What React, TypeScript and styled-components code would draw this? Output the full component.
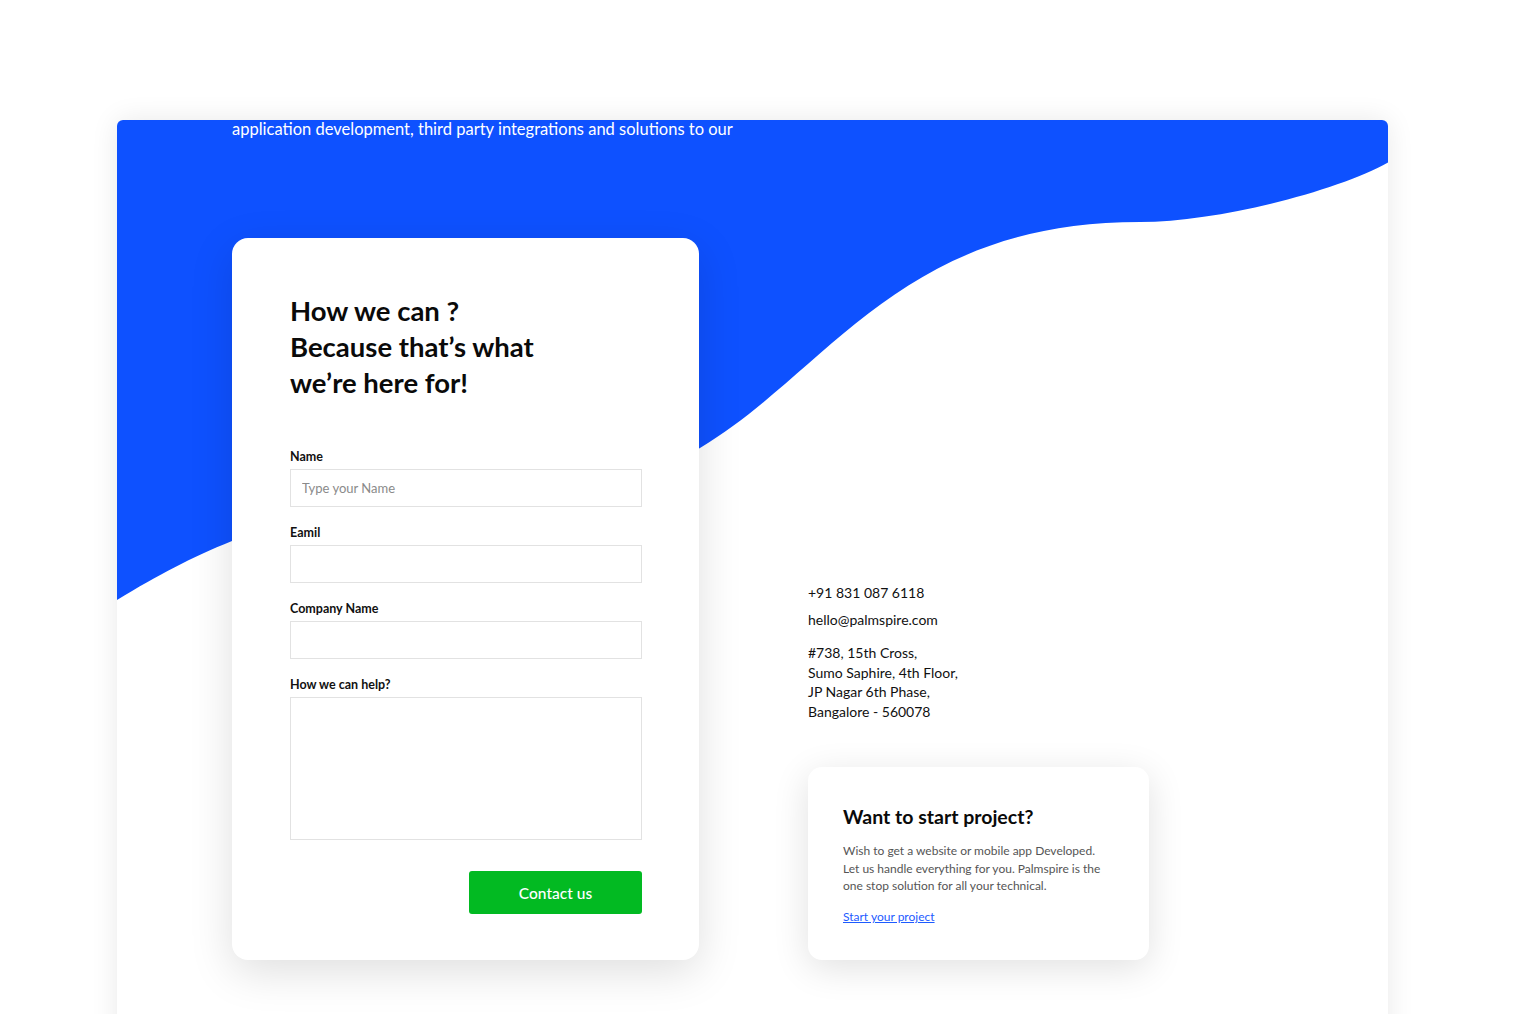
import React from "react";
import styled, { createGlobalStyle } from "styled-components";

const GlobalStyle = createGlobalStyle`
  html, body { margin: 0; padding: 0; background: #ffffff; }
  body { font-family: Lato, "Noto Sans", "Liberation Sans", sans-serif; color: #111; }
  * { box-sizing: border-box; }
`;

const Page = styled.div`
  height: 1014px;
  overflow: hidden;
  padding: 120px 0 0 117px;
`;

const Panel = styled.section`
  position: relative;
  width: 1271px;
  min-height: 1000px;
  background: #ffffff;
  border-radius: 6px 6px 0 0;
  box-shadow: 0 0 28px rgba(0, 0, 0, 0.09);
  overflow: hidden;
`;

const Wave = styled.svg`
  position: absolute;
  top: 0;
  left: 0;
  width: 1271px;
  height: 600px;
  z-index: 0;
`;

const Content = styled.div`
  position: relative;
  z-index: 1;
  padding-left: 115px;
`;

const Intro = styled.p`
  margin: 0;
  color: #ffffff;
  font-size: 16.5px;
  line-height: 18px;
  font-weight: 400;
`;

const Row = styled.div`
  display: flex;
  align-items: flex-end;
  gap: 109px;
  margin-top: 100px;
`;

const FormCard = styled.form`
  width: 467px;
  height: 722px;
  background: #ffffff;
  border-radius: 16px;
  box-shadow: 0 12px 44px rgba(0, 0, 0, 0.13);
  padding: 55px 57px 46px 58px;
  display: flex;
  flex-direction: column;
`;

const Heading = styled.h1`
  margin: 0 0 48px;
  font-size: 27.5px;
  line-height: 36px;
  font-weight: 700;
  color: #0a0a0a;
`;

const Field = styled.label<{ $last?: boolean }>`
  display: flex;
  flex-direction: column;
  gap: 4px;
  margin-bottom: ${(p) => (p.$last ? "31px" : "18px")};
`;

const LabelText = styled.span`
  font-size: 12.5px;
  line-height: 16px;
  font-weight: 700;
  color: #111;
`;

const Input = styled.input`
  width: 352px;
  height: 38px;
  border: 1px solid #e2e2e2;
  border-radius: 0;
  padding: 0 11px;
  font-family: inherit;
  font-size: 13px;
  color: #333;
  background: #fff;
  outline: none;
  &::placeholder { color: #8a8a8a; }
`;

const TextArea = styled.textarea`
  width: 352px;
  height: 143px;
  border: 1px solid #e2e2e2;
  border-radius: 0;
  resize: none;
  font-family: inherit;
  background: #fff;
  outline: none;
`;

const SubmitRow = styled.div`
  display: flex;
  justify-content: flex-end;
`;

const Button = styled.button`
  width: 173px;
  height: 43px;
  border: none;
  border-radius: 3px;
  background: #02ba22;
  color: #ffffff;
  font-family: inherit;
  font-size: 15.5px;
  font-weight: 500;
  cursor: pointer;
`;

const Side = styled.aside`
  width: 341px;
  display: flex;
  flex-direction: column;
`;

const InfoLine = styled.p<{ $gap?: number }>`
  margin: 0 0 ${(p) => p.$gap ?? 0}px;
  font-size: 14px;
  line-height: 20px;
  color: #111;
`;

const Address = styled.address`
  font-style: normal;
  font-size: 14px;
  line-height: 19.5px;
  color: #111;
  margin-bottom: 46px;
`;

const ProjectCard = styled.div`
  width: 341px;
  height: 193px;
  background: #ffffff;
  border-radius: 14px;
  box-shadow: 0 8px 36px rgba(0, 0, 0, 0.12);
  padding: 38px 30px 0 35px;
`;

const ProjectTitle = styled.h2`
  margin: 0 0 13px;
  font-size: 19.5px;
  line-height: 24px;
  font-weight: 700;
  color: #0a0a0a;
`;

const ProjectText = styled.p`
  margin: 0 0 13.5px;
  font-size: 12px;
  line-height: 17.5px;
  color: #555;
`;

const ProjectLink = styled.a`
  display: block;
  font-size: 12px;
  line-height: 17.5px;
  color: #1d5bff;
  text-decoration: underline;
`;

const WAVE_PATH =
  "M0,480 C43,454 73,438 115,421 C183,395 523,364 583,328 " +
  "C713,250 783,102 1023,102 C1103,102 1223,70 1272,42 L1272,0 L0,0 Z";

export default function App() {
  return (
    <>
      <GlobalStyle />
      <Page>
        <Panel>
          <Wave viewBox="0 0 1271 600" preserveAspectRatio="none" aria-hidden="true">
            <path d={WAVE_PATH} fill="#0e51ff" />
          </Wave>
          <Content>
            <Intro>application development, third party integrations and solutions to our</Intro>
            <Row>
              <FormCard onSubmit={(e) => e.preventDefault()}>
                <Heading>
                  How we can ?<br />
                  Because that’s what<br />
                  we’re here for!
                </Heading>
                <Field>
                  <LabelText>Name</LabelText>
                  <Input placeholder="Type your Name" />
                </Field>
                <Field>
                  <LabelText>Eamil</LabelText>
                  <Input />
                </Field>
                <Field>
                  <LabelText>Company Name</LabelText>
                  <Input />
                </Field>
                <Field $last>
                  <LabelText>How we can help?</LabelText>
                  <TextArea />
                </Field>
                <SubmitRow>
                  <Button type="submit">Contact us</Button>
                </SubmitRow>
              </FormCard>
              <Side>
                <InfoLine $gap={7}>+91 831 087 6118</InfoLine>
                <InfoLine $gap={13}>hello@palmspire.com</InfoLine>
                <Address>
                  #738, 15th Cross,<br />
                  Sumo Saphire, 4th Floor,<br />
                  JP Nagar 6th Phase,<br />
                  Bangalore - 560078
                </Address>
                <ProjectCard>
                  <ProjectTitle>Want to start project?</ProjectTitle>
                  <ProjectText>
                    Wish to get a website or mobile app Developed.<br />
                    Let us handle everything for you. Palmspire is the<br />
                    one stop solution for all your technical.
                  </ProjectText>
                  <ProjectLink href="#">Start your project</ProjectLink>
                </ProjectCard>
              </Side>
            </Row>
          </Content>
        </Panel>
      </Page>
    </>
  );
}
